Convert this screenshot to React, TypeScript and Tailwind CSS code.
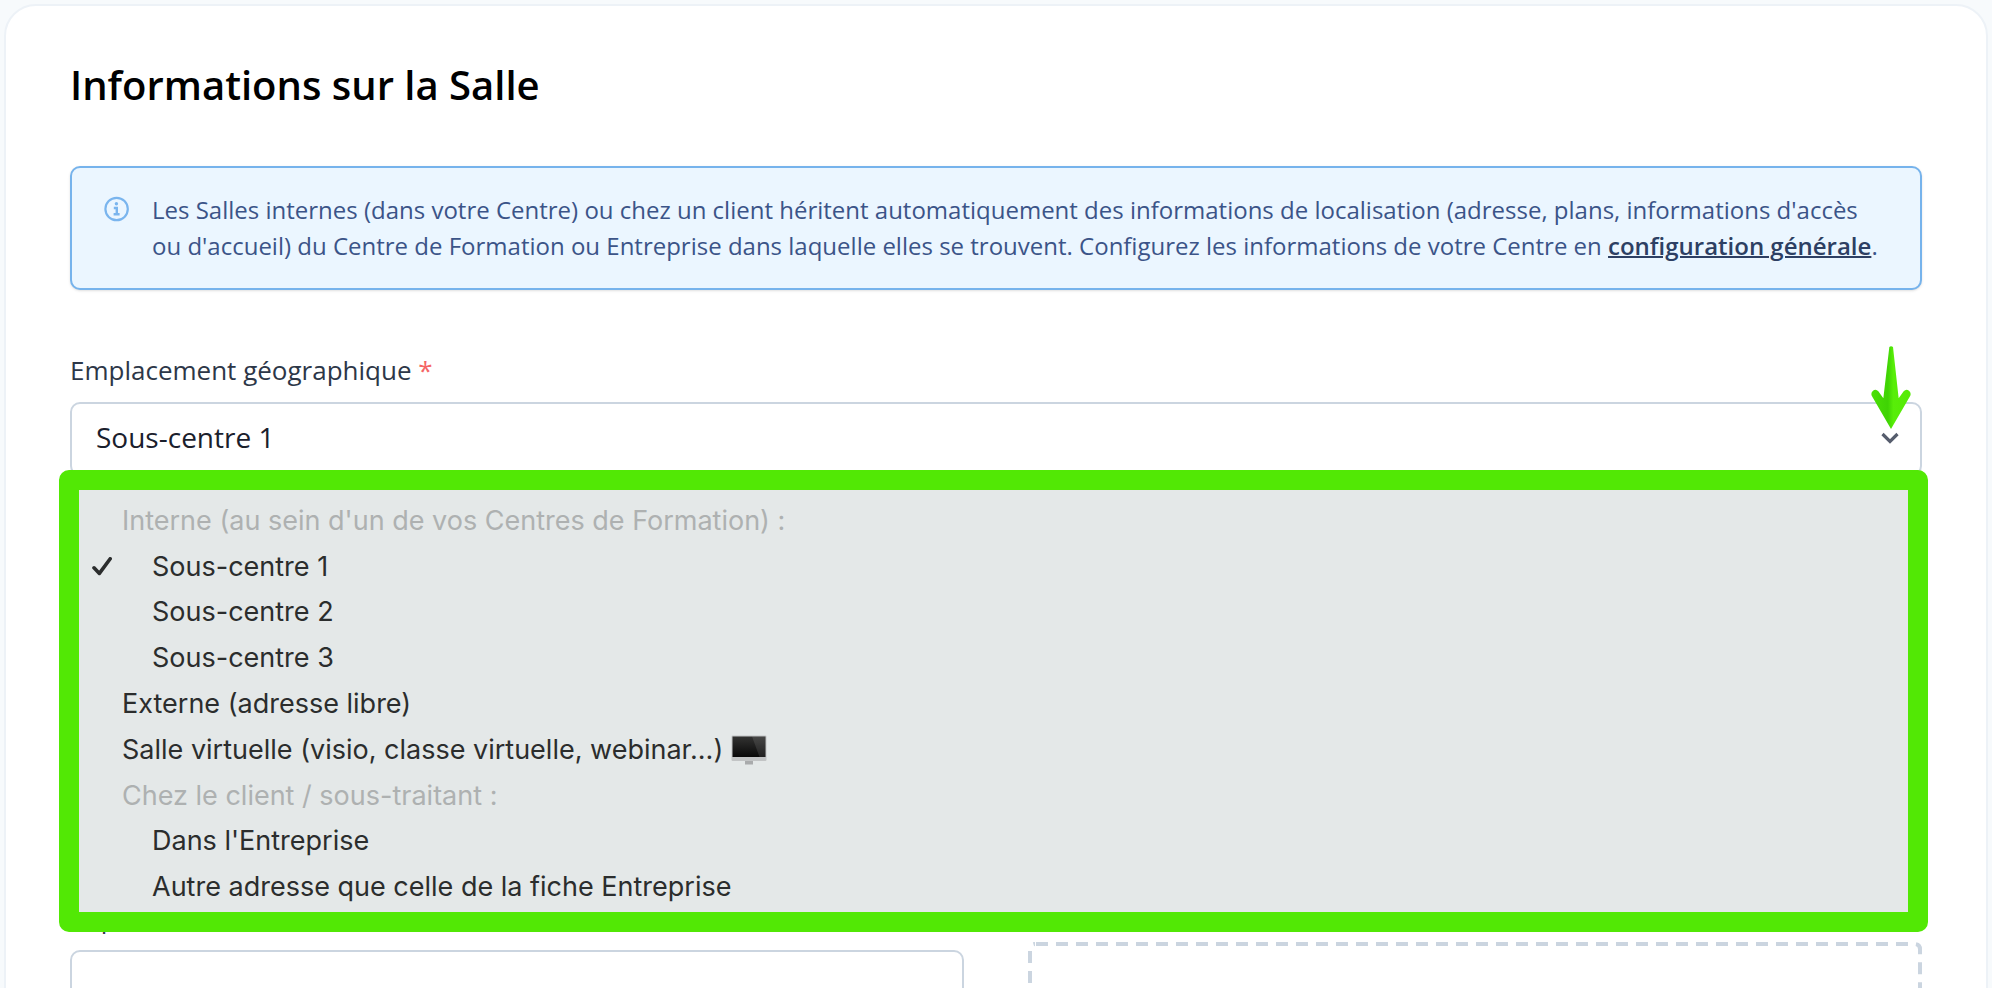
import { useState } from "react";
import type { ReactNode } from "react";
import clsx from "clsx";

type LocationItem = {
  label: string;
  value?: string;
  nested?: boolean;
  icon?: ReactNode;
};

// Items without a value are group headings
const LOCATION_ITEMS: LocationItem[] = [
  { label: "Interne (au sein d'un de vos Centres de Formation) :" },
  { label: "Sous-centre 1", value: "center-1", nested: true },
  { label: "Sous-centre 2", value: "center-2", nested: true },
  { label: "Sous-centre 3", value: "center-3", nested: true },
  { label: "Externe (adresse libre)", value: "external" },
  {
    label: "Salle virtuelle (visio, classe virtuelle, webinar...)",
    value: "virtual",
    icon: <ScreenIcon />,
  },
  { label: "Chez le client / sous-traitant :" },
  { label: "Dans l'Entreprise", value: "company", nested: true },
  {
    label: "Autre adresse que celle de la fiche Entreprise",
    value: "company-other",
    nested: true,
  },
];

function InfoIcon() {
  return (
    <svg viewBox="0 0 26 26" className="size-[26px]" fill="none" aria-hidden="true">
      <circle cx="12.6" cy="13" r="11.2" stroke="#7ab5ee" strokeWidth="2.2" />
      <circle cx="12.4" cy="7.8" r="1.7" fill="#7ab5ee" />
      <path d="M9.8 12H12.8V18M9.6 18.2H15.6" stroke="#7ab5ee" strokeWidth="2.4" />
    </svg>
  );
}

function CheckIcon() {
  return (
    <svg viewBox="0 0 20 20" className="size-5" fill="none" aria-hidden="true">
      <path
        d="M2 10.8L7.4 16.4L18.2 1.8"
        stroke="#2b2d2d"
        strokeWidth="3.6"
        strokeLinecap="round"
        strokeLinejoin="round"
      />
    </svg>
  );
}

function ChevronIcon() {
  return (
    <svg viewBox="0 0 20 14" className="h-[14px] w-5" fill="none" aria-hidden="true">
      <path d="M2.5 3L10 10.4L17.5 3" stroke="#565d6d" strokeWidth="3.2" />
    </svg>
  );
}

function ScreenIcon() {
  return (
    <svg viewBox="0 0 36 30" className="h-[30px] w-9" aria-hidden="true">
      <defs>
        <linearGradient id="screen" x1="0" y1="0" x2="0" y2="1">
          <stop offset="0" stopColor="#333332" />
          <stop offset="1" stopColor="#080808" />
        </linearGradient>
      </defs>
      <rect x="0.5" y="0.5" width="35" height="25.5" rx="1.2" fill="#c2c4c5" />
      <rect x="1.5" y="1.5" width="33" height="20.5" fill="url(#screen)" />
      <path d="M21 1.5H34.5V22H28.5Z" fill="#fff" opacity="0.1" />
      <path d="M14 26H22V29.5H14Z" fill="#a9abac" />
    </svg>
  );
}

function GreenArrow() {
  return (
    <svg viewBox="0 0 118 249" className="h-[83px] w-10" aria-hidden="true">
      <defs>
        <linearGradient id="arrow" x1="0" y1="0" x2="1" y2="0">
          <stop offset="0" stopColor="#4be005" />
          <stop offset="0.42" stopColor="#3fd304" />
          <stop offset="0.56" stopColor="#58ee08" />
          <stop offset="1" stopColor="#55ea06" />
        </linearGradient>
      </defs>
      <path
        d="M54 3Q59 -2 65 3L82 157L97 136Q104 128 113 134Q121 141 116 151L59 249L2 151Q-3 141 5 134Q14 128 21 136L36 157Z"
        fill="url(#arrow)"
      />
    </svg>
  );
}

function FieldLabel({
  htmlFor,
  required,
  children,
}: {
  htmlFor: string;
  required?: boolean;
  children: ReactNode;
}) {
  return (
    <label htmlFor={htmlFor} className="block pb-3.5 text-[26px] leading-9 text-[#2d3748]">
      {children}
      {required && <span className="text-[#f56565]"> *</span>}
    </label>
  );
}

function LocationMenu({
  value,
  onSelect,
}: {
  value: string;
  onSelect: (value: string) => void;
}) {
  return (
    <div
      role="listbox"
      aria-label="Emplacement géographique"
      className="absolute top-[68px] -right-1.5 -left-[11px] z-10 grid h-[462px] auto-rows-fr rounded-[10px] border-20 border-[#52e805] bg-[#e4e8e8] pt-2 pb-0.5 font-[Inter,sans-serif] text-[27px] leading-10"
    >
      {LOCATION_ITEMS.map((item) => {
        if (!item.value) {
          return (
            <div key={item.label} className="flex items-center pl-[43px] text-[#aeb1b1]">
              {item.label}
            </div>
          );
        }

        const selected = item.value === value;

        return (
          <button
            key={item.value}
            type="button"
            role="option"
            aria-selected={selected}
            onClick={() => onSelect(item.value!)}
            className="flex items-center pl-[13px] text-left text-[#2b2d2d]"
          >
            <span className={clsx("shrink-0", item.nested ? "w-[60px]" : "w-[30px]")}>
              {selected && <CheckIcon />}
            </span>
            {item.label}
            {item.icon && <span className="ml-2">{item.icon}</span>}
          </button>
        );
      })}
    </div>
  );
}

export default function App() {
  const [location, setLocation] = useState("center-1");

  return (
    <main className="h-screen overflow-hidden bg-[#f7fafc] p-1 font-['Open_Sans',sans-serif]">
      <section className="min-h-[150vh] rounded-[32px] border-2 border-[#edf2f7] bg-white px-16 pt-[51px]">
        <h1 className="text-[40px] leading-[56px] font-semibold text-black">
          Informations sur la Salle
        </h1>

        {/* Info banner */}
        <div className="mt-[53px] flex gap-[22px] rounded-[10px] border-2 border-[#76b3ec] bg-[#ebf6ff] px-8 py-6 shadow-sm">
          <span className="shrink-0 pt-1">
            <InfoIcon />
          </span>
          <p className="text-2xl leading-9 text-[#3b5488]">
            Les Salles internes (dans votre Centre) ou chez un client héritent automatiquement des
            informations de localisation (adresse, plans, informations d'accès ou d'accueil) du
            Centre de Formation ou Entreprise dans laquelle elles se trouvent. Configurez les
            informations de votre Centre en{" "}
            <a
              href="#configuration"
              className="font-semibold text-[#2d3f63] underline decoration-2"
            >
              configuration générale
            </a>
            .
          </p>
        </div>

        {/* Location */}
        <div className="mt-[62px]">
          <FieldLabel htmlFor="location" required>
            Emplacement géographique
          </FieldLabel>
          <div className="relative">
            <select
              id="location"
              value={location}
              onChange={(e) => setLocation(e.target.value)}
              className="block h-[74px] w-full appearance-none rounded-[10px] border-2 border-[#cbd5e0] bg-white px-6 pb-1 text-[28px] text-[#1a202c]"
            >
              {LOCATION_ITEMS.filter((item) => item.value).map((item) => (
                <option key={item.value} value={item.value}>
                  {item.label}
                </option>
              ))}
            </select>
            <span className="pointer-events-none absolute top-[29px] right-[22px]">
              <ChevronIcon />
            </span>
            <span className="pointer-events-none absolute -top-14 right-[11px]">
              <GreenArrow />
            </span>
            <LocationMenu value={location} onSelect={setLocation} />
          </div>
        </div>

        {/* Capacity and drop zone */}
        <div className="mt-[424px] grid grid-cols-2 gap-16">
          <div>
            <FieldLabel htmlFor="capacity">Capacité</FieldLabel>
            <input
              id="capacity"
              type="text"
              className="block h-[74px] w-full rounded-[10px] border-2 border-[#cbd5e0] bg-white px-6 text-[28px] text-[#1a202c]"
            />
          </div>
          <div className="pt-[42px]">
            <svg className="block h-80 w-full" fill="none" aria-hidden="true">
              <rect
                x="2"
                y="2"
                rx="5"
                className="h-[calc(100%-4px)] w-[calc(100%-4px)]"
                stroke="#cbd5e0"
                strokeWidth="4"
                strokeDasharray="12 8"
                strokeDashoffset="-1"
              />
            </svg>
          </div>
        </div>
      </section>
    </main>
  );
}
